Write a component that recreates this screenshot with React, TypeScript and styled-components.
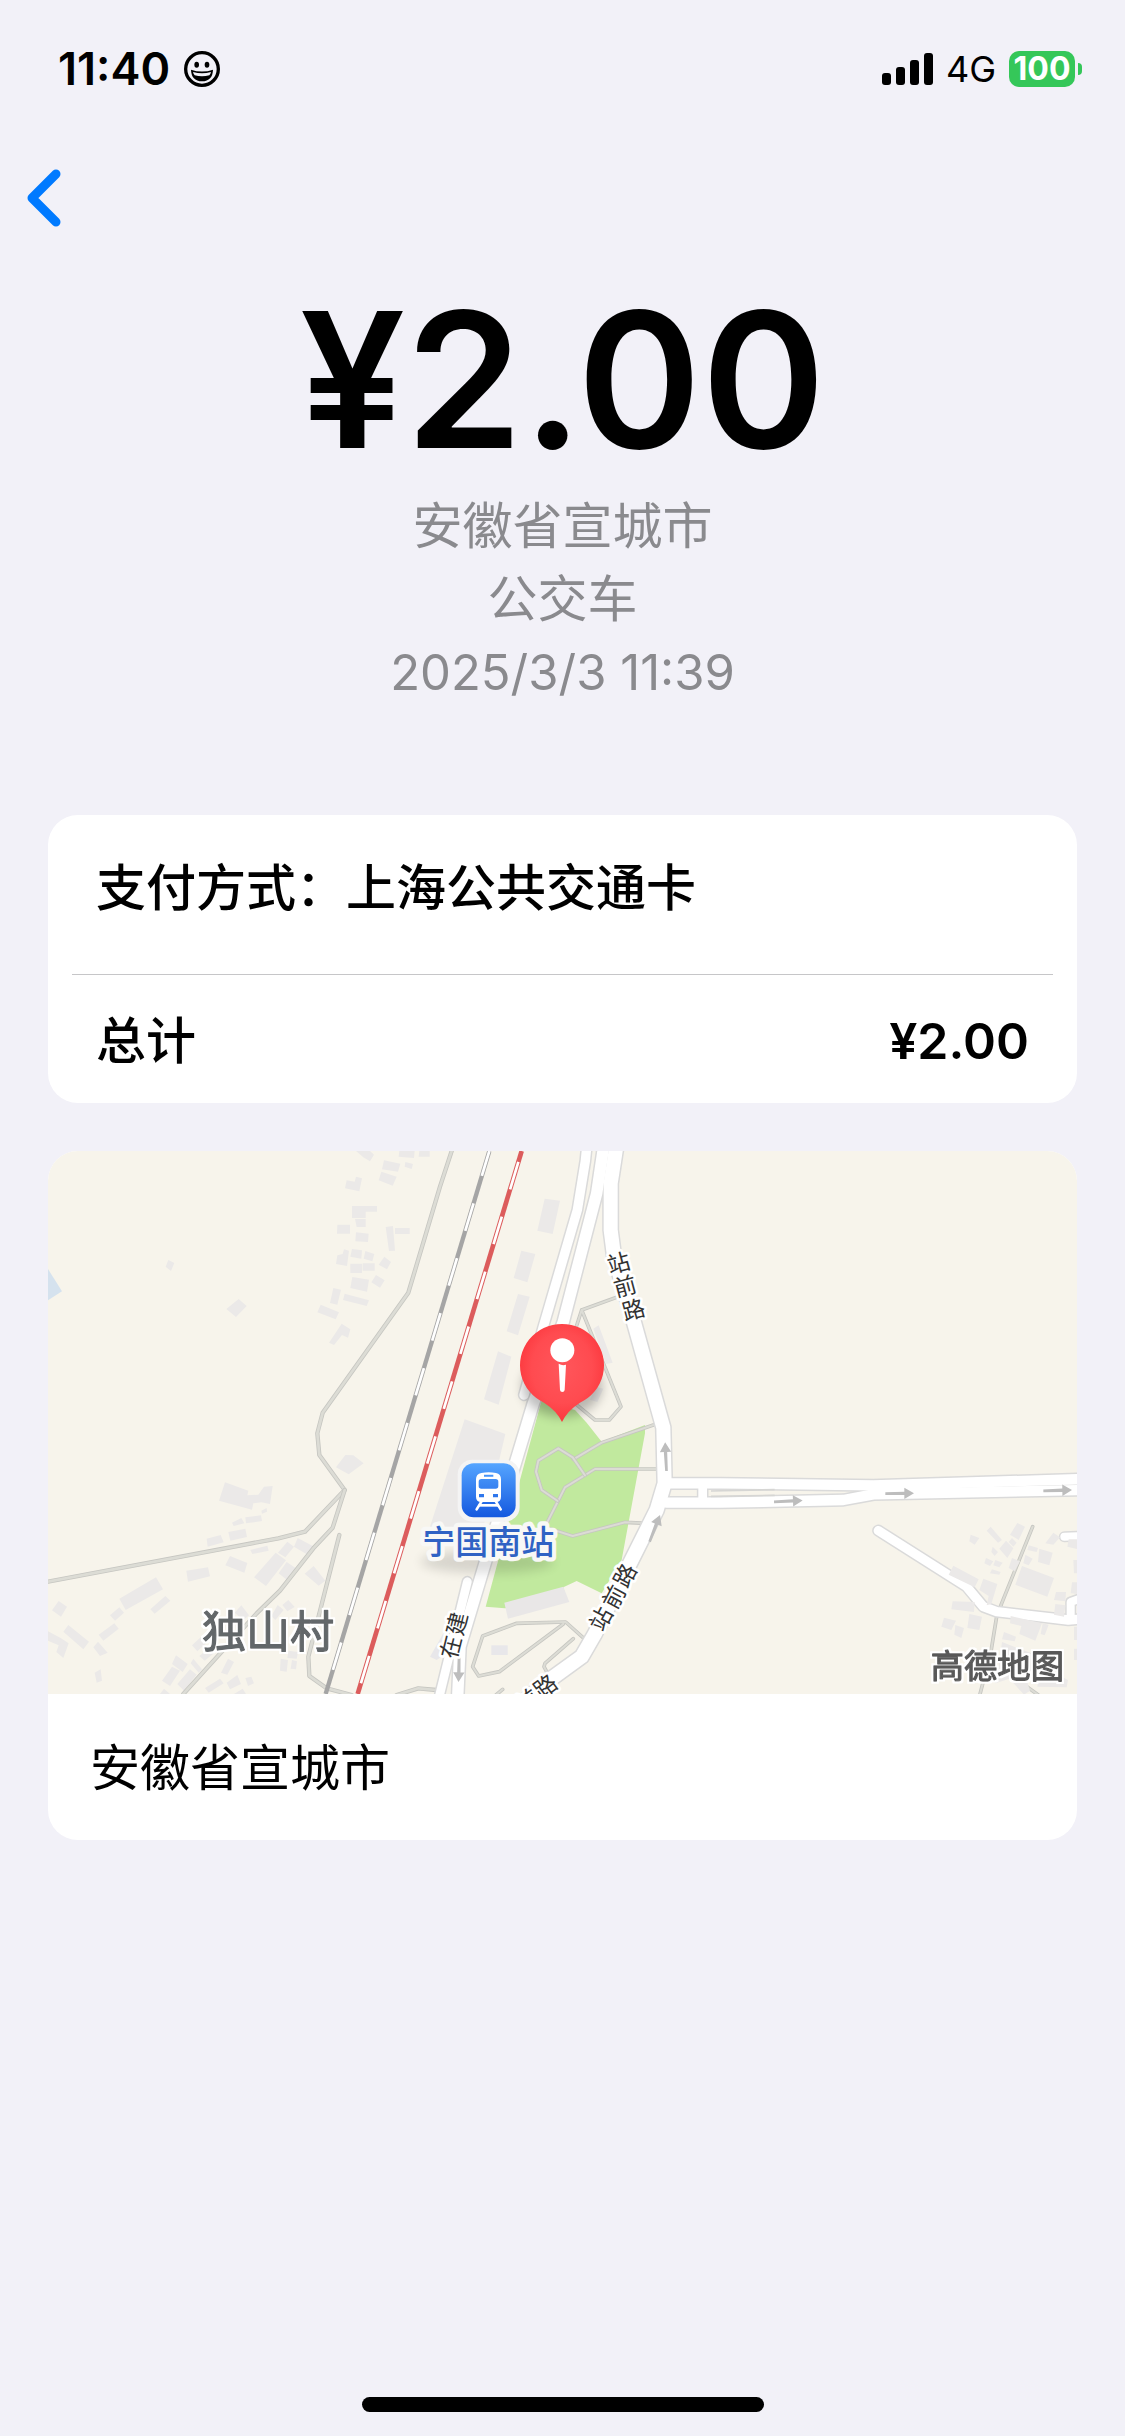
import React from "react";
import styled, { createGlobalStyle } from "styled-components";

const GlobalStyle = createGlobalStyle`
  *, *::before, *::after { box-sizing: border-box; }
  body {
    margin: 0;
    background: #f2f1f8;
    color: #000;
    font-family: Inter, "Noto Sans CJK SC", sans-serif;
  }
`;

const Screen = styled.div`
  display: flex;
  flex-direction: column;
  min-height: 100vh;
`;

const StatusBar = styled.header`
  display: flex;
  align-items: center;
  justify-content: space-between;
  height: 138px;
  padding: 0 43px 0 58px;
`;

const StatusGroup = styled.div<{ $gap: number }>`
  display: flex;
  align-items: center;
  gap: ${(p) => p.$gap}px;
`;

const Clock = styled.time`
  font-size: 45px;
  line-height: 52px;
  font-weight: 600;
`;

const Network = styled.span`
  font-size: 36px;
  line-height: 52px;
`;

const Battery = styled.div`
  display: flex;
  align-items: center;
  gap: 3px;
  &::after {
    content: "";
    width: 4px;
    height: 12px;
    border-radius: 0 6px 6px 0;
    background: #35c759;
  }
`;

const BatteryLevel = styled.span`
  width: 66px;
  height: 36px;
  border-radius: 10px;
  background: #35c759;
  color: #fff;
  font-size: 32px;
  line-height: 36px;
  font-weight: 700;
  text-align: center;
`;

const NavBar = styled.nav`
  display: flex;
  height: 120px;
  padding: 0 16px;
`;

const BackButton = styled.button`
  display: flex;
  align-items: center;
  justify-content: center;
  width: 56px;
  padding: 0;
  border: 0;
  background: none;
`;

const Summary = styled.section`
  display: flex;
  flex-direction: column;
  align-items: center;
  padding: 12px 48px 106px;
  text-align: center;
`;

const Amount = styled.h1`
  margin: 0;
  font-size: 188px;
  line-height: 220px;
  font-weight: 600;
`;

const Detail = styled.p<{ $size?: number }>`
  margin: 0;
  color: #8a8a8e;
  font-size: ${(p) => p.$size ?? 50}px;
  line-height: 73px;
`;

const Stack = styled.main`
  display: flex;
  flex-direction: column;
  gap: 48px;
  padding: 0 48px;
`;

const Card = styled.section`
  overflow: hidden;
  border-radius: 30px;
  background: #fff;
`;

const Row = styled.div<{ $top: number; $bottom: number }>`
  display: flex;
  justify-content: space-between;
  padding: ${(p) => p.$top}px 48px ${(p) => p.$bottom}px;
  font-size: 50px;
  line-height: 60px;
`;

const Label = styled.span`
  font-weight: 500;
`;

const Total = styled.span`
  font-weight: 600;
`;

const Divider = styled.hr`
  height: 1px;
  margin: 0 24px;
  border: 0;
  background: #c6c6c8;
`;

const MapDrawing = styled.svg`
  display: block;
  width: 100%;
  height: auto;
  background: #f7f4eb;
`;

const PlaceName = styled.p`
  margin: 0;
  padding: 44px 42px 42px;
  font-size: 50px;
  line-height: 60px;
`;

const HomeIndicator = styled.div`
  width: 402px;
  height: 15px;
  margin: auto auto 24px;
  border-radius: 8px;
  background: #000;
`;

const FONT = '"Noto Sans CJK SC", sans-serif';

type RoadProps = { d: string; width?: number; cap?: "butt" | "round" };

const Lane = ({ d, width = 12, cap = "round" }: RoadProps) => (
  <g fill="none" strokeLinejoin="round" strokeLinecap={cap}>
    <path d={d} stroke="#c6c6c1" strokeWidth={width} />
    <path d={d} stroke="#dcdcd5" strokeWidth={width - 5} />
  </g>
);

const Streets = ({ roads }: { roads: { d: string; w: number }[] }) => (
  <g fill="none" strokeLinejoin="round" strokeLinecap="round">
    {roads.map((r) => (
      <path key={r.d} d={r.d} stroke="#dadada" strokeWidth={r.w + 9} />
    ))}
    {roads.map((r) => (
      <path key={r.d} d={r.d} stroke="#fff" strokeWidth={r.w} />
    ))}
  </g>
);

const Arrow = ({ x, y, angle }: { x: number; y: number; angle: number }) => (
  <path
    transform={`translate(${x} ${y}) rotate(${angle})`}
    d="M-43-3L14-5V-17L43 0L14 17V5L-43 5Z"
    fill="#bdbdbd"
  />
);

type RoadLabelProps = {
  text: string;
  centers: [number, number][];
  angle: number;
  size?: number;
};

/* Sets every character on its own centre point, turned by the same angle. */
const RoadLabel = ({ text, centers, angle, size = 68 }: RoadLabelProps) => {
  const rad = (angle * Math.PI) / 180;
  const dx = -size / 2;
  const dy = size * 0.38;
  const xs = centers.map(([x]) => Math.round(x + dx * Math.cos(rad) - dy * Math.sin(rad)));
  const ys = centers.map(([, y]) => Math.round(y + dx * Math.sin(rad) + dy * Math.cos(rad)));
  return (
    <text
      x={xs.join(" ")}
      y={ys.join(" ")}
      rotate={angle}
      fontFamily={FONT}
      fontSize={size}
      fill="#333"
      stroke="#fff"
      strokeWidth={16}
      strokeLinejoin="round"
      paintOrder="stroke"
    >
      {text}
    </text>
  );
};

const northVillage =
  "M948 33H990L1002 44L990 64L970 52Z M1078 33H1124L1122 54L1076 50Z M1138 33H1169V50H1136Z M1032 61L1081 71L1074 95L1026 88Z M1096 66L1119 72L1115 87L1094 80Z M1024 95L1070 110L1058 137L1016 121Z M920 121L944 125L948 110L966 115L958 154L915 145Z M936 198H1011V215H977V234H936Z M945 237H977V261H950Z M892 254H930V281H891Z M948 277L986 281L984 306L946 304Z M1037 261L1059 258L1065 332L1047 333Z M1065 264H1109V282H1065Z M912 328L927 332L921 378L888 372L892 346L908 342Z M936 327L966 331L964 356L931 350Z M976 333L1003 342L997 364L971 356Z M1033 350L1053 366L1041 388L1016 374Z M931 371H966V399H931Z M968 370H1004V392H968Z M937 411L987 419L981 455L931 444Z M1008 405L1034 421L1020 443L994 427Z M880 444L903 449L892 494L870 489Z M914 461L987 481L980 498L909 480Z M842 494L897 517L887 538L832 517Z M905 551L931 568L924 593L906 585L882 615L867 608Z M385 360L403 369L393 393L377 380Z M596 477L620 498L588 531L559 507Z";

const village =
  "M555 247L625 272L622 286L655 284L672 260L698 258L690 312L664 307L640 310L636 329L537 302Z M916 165L940 166L971 190L926 223L888 202Z M680 324L681 335L666 341L664 332Z M604 354L613 370L581 378L576 368Z M616 352L663 346L666 363L618 370Z M565 396L616 386L621 411L571 422Z M500 416L542 405L551 427L503 440Z M631 450L682 437L686 452L637 462Z M570 468L622 489L613 518L556 496Z M439 512L504 502L510 529L444 545Z M238 596L348 532L369 568L257 630Z M376 588L391 602L344 641L331 628Z M238 622L252 638L225 662L210 646Z M223 670L236 686L190 722L176 704Z M56 603L81 620L63 650L36 631Z M85 675L147 725L130 748L70 695Z M24 694L62 714L86 730L70 774L49 756L56 736L24 722Z M174 725L203 758L180 768L160 742Z M182 808L186 842L170 848L164 818Z M773 414L824 441L808 467L762 440Z M742 425L762 440L736 472L714 458Z M707 458L738 481L678 558L642 532Z M740 486L770 506L742 541L716 520Z M821 498L856 542L836 557L794 521Z M604 616L627 646L610 660L584 638Z M713 615L731 630L706 660L694 648Z M745 600L764 621L742 634L727 615Z M482 712L498 730L472 754L456 736Z M408 766L443 792L428 816L396 792Z M460 776L486 808L476 818L452 790Z M396 800L420 812L390 858L366 842Z M450 808L470 824L432 872L412 852Z M372 866L390 882H360Z M564 776L582 786L562 824L543 818Z M540 836L551 850L506 878L495 864Z M592 825L603 852L570 868L560 848Z M616 834L634 830L642 850L624 858Z M608 866L618 882H582Z M746 752L774 756L770 776L742 774Z M722 776L744 780L740 815L720 812Z M756 780L771 784L768 808L752 806Z M510 742L526 756L494 782L478 768Z";

const eastVillage =
  "M752 404L778 414L764 434L748 424Z M812 380L846 420L834 428L800 392Z M892 369L915 380L896 420L870 404Z M858 422L880 445L862 474L838 446Z M876 414L890 428L880 440L866 426Z M818 440L834 456L824 468L814 456Z M798 474L820 484L810 498L793 490Z M826 480L848 488L838 502L820 496Z M816 508L842 516L838 524L810 520Z M876 474L900 484L884 514L866 504Z M926 436L954 444L950 456L922 450Z M916 464L938 476L926 496L910 490Z M958 446L998 458L988 496L954 486Z M906 498L1002 534L982 590L886 554Z M1000 398L1020 412L1000 434L976 430Z M1046 418H1071V447L1042 440Z M1060 480H1071V520H1062Z M1056 547H1071V582L1052 580Z M1008 576L1038 576L1036 604L1002 600Z M1006 612L1036 616L1032 650L1002 644Z M700 497L776 538L764 562L686 524Z M790 536L832 552L814 612L800 616L806 588L778 570Z M698 604L764 606L762 636L694 628Z M748 642L786 650L778 690L742 684Z M672 653L708 662L694 690L664 680Z M706 675L732 684L724 714L703 704Z M872 648L966 670L946 722L898 702L904 678L870 670Z M968 670L986 674L974 706L962 702Z M852 696L888 710L884 724L846 718Z M846 726L940 762L966 800L1044 840L1040 862L952 860L956 830L920 840L930 872L912 884L868 836L826 850L836 800Z M1062 680H1071V720H1062Z M1062 746H1071V780H1062Z";

const stationBuildings =
  "M434 176L480 182L458 282L412 272Z M364 332L406 342L382 427L341 414Z M354 462L389 470L354 586L320 574Z M294 634L334 650L296 794L252 778Z M194 838L316 882L246 1180L90 1160Z M596 556L638 668L618 672L580 566Z M586 740L610 746L592 786L570 780Z";

const TransitMap = () => (
  <MapDrawing viewBox="0 0 3087 1629" role="img" aria-label="地图">
    <defs>
      <linearGradient id="station" x1="0" y1="0" x2="0" y2="1">
        <stop offset="0" stopColor="#55a5ff" />
        <stop offset="1" stopColor="#1458df" />
      </linearGradient>
      <radialGradient id="pin" cx="0.5" cy="0.45" r="0.6">
        <stop offset="0" stopColor="#ff565b" />
        <stop offset="0.6" stopColor="#ff4b50" />
        <stop offset="1" stopColor="#fb3238" />
      </radialGradient>
      <filter id="soft" x="-40%" y="-40%" width="180%" height="180%">
        <feGaussianBlur stdDeviation="16" />
      </filter>
      <filter id="halo" x="-10%" y="-20%" width="120%" height="140%">
        <feMorphology in="SourceAlpha" operator="dilate" radius="5" result="wide" />
        <feFlood floodColor="#fff" />
        <feComposite in2="wide" operator="in" result="edge" />
        <feMerge>
          <feMergeNode in="edge" />
          <feMergeNode in="SourceGraphic" />
        </feMerge>
      </filter>
    </defs>

    <path d="M0 354L42 421L0 448Z" fill="#d5e2ee" />

    <g fill="#ebe9e8">
      <path d={northVillage} transform="translate(-24 -33)" />
      <path d={village} transform="translate(-24 747)" />
      <path d={stationBuildings} transform="translate(1056 -33)" />
    </g>

    <Lane width={13} d="M1211 0L1176 107L1081 425L824 785L808 847L814 912L890 1017L771 1142L691 1162L0 1292" />
    <Lane width={13} d="M890 1017L854 1130L796 1192L696 1319L626 1387L406 1629" />
    <Lane width={13} d="M874 1152L781 1517L784 1575L836 1612L911 1632" />
    <Lane width={13} d="M1046 1632L1111 1612L1165 1617" />

    <g fill="none">
      <path d="M1324 0L833 1629" stroke="#a5a5a5" strokeWidth={13} />
      <path d="M1324 0L833 1629" stroke="#fff" strokeWidth={8} strokeDasharray="86 86" strokeDashoffset={8} />
      <path d="M1421 0L929 1629" stroke="#dc5c5c" strokeWidth={14} />
      <path d="M1421 0L929 1629" stroke="#fff" strokeWidth={8} strokeDasharray="86 86" strokeDashoffset={138} />
    </g>

    <g transform="translate(1056 747)">
      <path
        d="M425 0L525 30L560 68L605 125L735 75L735 100L665 480L605 580L530 543L490 562L500 600L315 625L257 620Z"
        fill="#c1e99e"
      />
      <path d="M313 608L490 560L508 606L324 656Z" fill="#e9e7e7" />
      <path d="M274 736H323V765H274Z" fill="#e8e7ea" />
      <path d="M130 700L90 770L110 780L140 760Z" fill="#e8e7ea" />
      <Lane width={11} d="M760 75L605 128L520 178" />
      <Lane width={11} d="M770 207H585L495 262L440 370L430 380L518 408L675 367L740 370" />
      <Lane width={11} d="M555 226L518 172L475 145L415 182L408 215L425 270L473 303" />
      <Lane width={11} d="M525 10L585 60H628L663 20L545-270L650-308M545-270L500-130" />
      <Lane width={11} d="M555 718L497 666L350 670L248 708L218 800L236 828L298 815L490 672" />
      <Lane width={11} d="M520 716L435 790L432 800L440 815" />
      <Lane width={11} d="M308 868L270 900" />
    </g>

    <Streets
      roads={[
        { d: "M1617-20L1612 30L1588 177L1486 527L1428 732", w: 28 },
        { d: "M1668-20L1646 127L1546 512L1456 757L1296 1287L1236 1487L1228 1660", w: 34 },
        { d: "M1258 1292L1168 1660", w: 26 },
        { d: "M1856 997L2016 997L2476 1003L3110 984", w: 31 },
        { d: "M1856 1055L2016 1055L2386 1047L2476 1030L3110 1017", w: 31 },
        { d: "M1964 997V1055", w: 26 },
        {
          d: "M1706-20L1688 97L1688 237L1698 315L1756 507L1839 805L1846 830L1850 997L1826 1077L1741 1247L1640 1450L1601 1517L1500 1590L1430 1650",
          w: 42,
        },
      ]}
    />
    <path d="M1989 1020L2180 1016M1989 1036L2180 1033" stroke="#d6d6d4" strokeWidth={5} />

    <g transform="translate(2016 747)">
      <Lane width={11} d="M938 380L845 610L830 650L812 760L778 890" />
      <Lane width={11} d="M900 845L955 885" />
      <Streets
        roads={[
          { d: "M475 392L740 560L790 620L830 635L1045 660L1090 657", w: 28 },
          { d: "M1033 410L1100 408", w: 24 },
          { d: "M1052 652V606L1090 592", w: 24 },
        ]}
      />
      <path d={eastVillage} fill="#ebe9e8" />
      <Arrow x={205} y={303} angle={-2} />
      <Arrow x={539} y={280} angle={0} />
      <Arrow x={1013} y={271} angle={-1} />
    </g>

    <g transform="translate(1056 747)">
      <Arrow x={797} y={170} angle={-92} />
      <Arrow x={764} y={385} angle={-68} />
      <Arrow x={177} y={803} angle={92} />
      <RoadLabel text="站前路" angle={-62} centers={[[602, 656], [641, 590], [674, 526]]} />
      <RoadLabel text="在建" angle={-76} centers={[[151, 741], [170, 671]]} />
      <RoadLabel text="前路" angle={-37} centers={[[382, 902], [436, 858]]} />
    </g>
    <g transform="translate(1056 -33)">
      <RoadLabel text="站前路" angle={-15} centers={[[655, 368], [675, 438], [700, 508]]} />
    </g>

    <g fontFamily={FONT} strokeLinejoin="round" filter="url(#halo)">
      <text x={462} y={1490} fontSize={132} fill="#63676a" stroke="#63676a" strokeWidth={4}>
        独山村
      </text>
      <text x={2648} y={1582} fontSize={100} fill="#5a5a5a" stroke="#5a5a5a" strokeWidth={4}>
        高德地图
      </text>
    </g>

    <g transform="translate(1056 747)">
      <ellipse cx={262} cy={485} rx={200} ry={34} fill="#000" opacity={0.13} filter="url(#soft)" />
      <text
        x={67}
        y={462}
        fontFamily={FONT}
        fontSize={99}
        fontWeight={500}
        fill="#2f62c4"
        stroke="#f8f8f6"
        strokeWidth={26}
        strokeLinejoin="round"
        paintOrder="stroke"
      >
        宁国南站
      </text>
      <rect x={173} y={179} width={186} height={186} rx={44} fill="#f4f4f4" />
      <rect x={185} y={190} width={162} height={162} rx={36} fill="url(#station)" />
      <path d="M246 302L230 328M286 302L302 328" stroke="#fff" strokeWidth={8} strokeLinecap="round" />
      <path d="M236 316H296" stroke="#fff" strokeWidth={8} />
      <path
        fillRule="evenodd"
        fill="#fff"
        d="M244 219Q266 214 288 219Q303 222 303 238V290Q303 306 288 306H244Q228 306 228 290V238Q228 222 244 219ZM252 224V230H280V224ZM244 237Q236 237 236 245V258Q236 266 244 266H287Q295 266 295 258V245Q295 237 287 237ZM237 282V292H252V282ZM279 282V292H294V282Z"
      />
    </g>

    <g transform="translate(1056 -33)">
      <ellipse cx={486} cy={740} rx={120} ry={90} fill="#000" opacity={0.25} filter="url(#soft)" />
      <path
        d="M486 846Q470 812 432 788A126 124 0 1 1 540 788Q502 812 486 846Z"
        fill="url(#pin)"
      />
      <circle cx={487} cy={631} r={36} fill="#fff" />
      <path d="M476 671Q487 678 498 674L494 750Q493 756 487 756Q481 756 480 750Z" fill="#fff" />
    </g>
  </MapDrawing>
);

const App = () => (
  <Screen lang="zh-CN">
    <GlobalStyle />
    <StatusBar>
      <StatusGroup $gap={14}>
        <Clock>11:40</Clock>
        <svg width="36" height="36" viewBox="0 0 108 108" aria-hidden="true">
          <circle cx="54" cy="54" r="49" fill="none" stroke="#000" strokeWidth="10" />
          <ellipse cx="38" cy="41" rx="7" ry="9" />
          <ellipse cx="69" cy="41" rx="7" ry="9" />
          <path d="M21 56Q54 67 87 56Q86 90 54 91Q22 90 21 56Z" />
          <path d="M27 63Q54 71 81 63Q80 69 76 73Q54 79 32 73Q28 69 27 63Z" fill="#f2f1f8" />
        </svg>
      </StatusGroup>
      <StatusGroup $gap={13}>
        <svg width="51" height="32" viewBox="0 0 51 32" aria-hidden="true">
          <rect x="0" y="20" width="9" height="12" rx="3" />
          <rect x="14" y="14" width="9" height="18" rx="3" />
          <rect x="28" y="7" width="9" height="25" rx="3" />
          <rect x="42" y="0" width="9" height="32" rx="3" />
        </svg>
        <Network>4G</Network>
        <Battery>
          <BatteryLevel>100</BatteryLevel>
        </Battery>
      </StatusGroup>
    </StatusBar>

    <NavBar>
      <BackButton type="button" aria-label="返回">
        <svg width="34" height="58" viewBox="0 0 34 58" fill="none" aria-hidden="true">
          <path d="M29 5L5 29L29 53" stroke="#007aff" strokeWidth="9" strokeLinecap="round" strokeLinejoin="round" />
        </svg>
      </BackButton>
    </NavBar>

    <Summary>
      <Amount>¥2.00</Amount>
      <Detail>安徽省宣城市</Detail>
      <Detail>公交车</Detail>
      <Detail $size={49}>2025/3/3 11:39</Detail>
    </Summary>

    <Stack>
      <Card>
        <Row $top={43} $bottom={56}>
          <Label>支付方式：上海公共交通卡</Label>
        </Row>
        <Divider />
        <Row $top={36} $bottom={32}>
          <Label>总计</Label>
          <Total>¥2.00</Total>
        </Row>
      </Card>
      <Card>
        <TransitMap />
        <PlaceName>安徽省宣城市</PlaceName>
      </Card>
    </Stack>

    <HomeIndicator />
  </Screen>
);

export default App;
